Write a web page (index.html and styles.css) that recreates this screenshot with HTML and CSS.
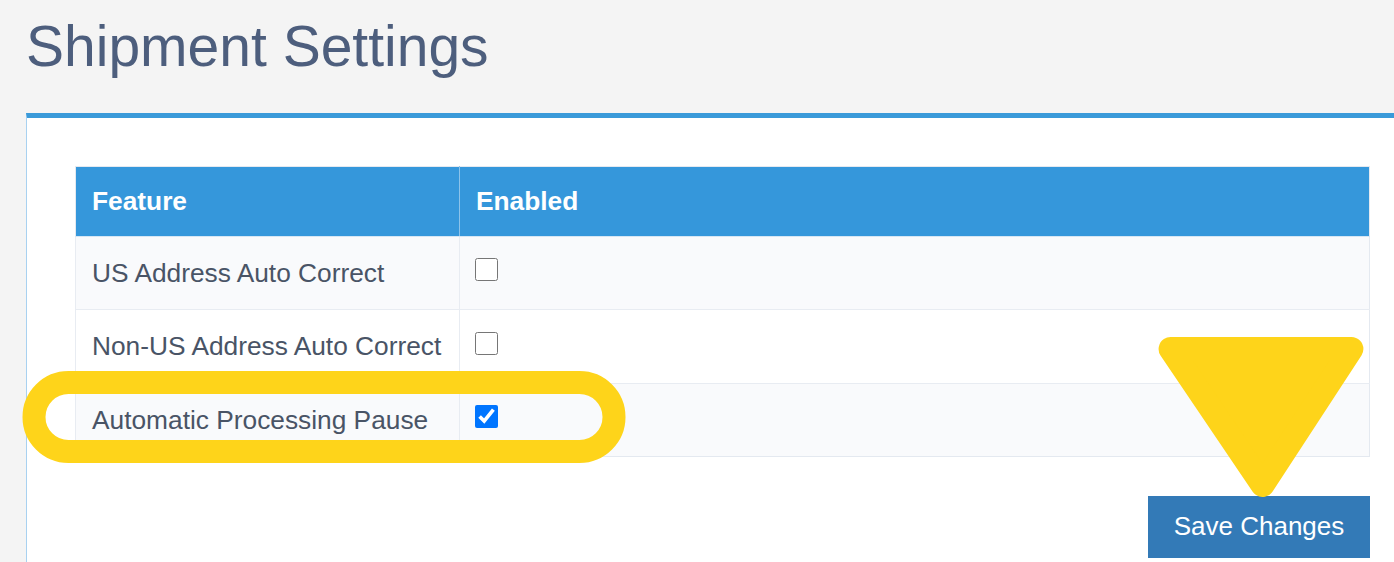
FILE: index.html
```html
<!DOCTYPE html>
<html lang="en">
<head>
  <meta charset="UTF-8">
  <meta name="viewport" content="width=device-width, initial-scale=1.0">
  <link rel="stylesheet" href="styles.css">
</head>
<body>

  <div class="page">
    <h1 class="page-title">Shipment Settings</h1>

    <div class="panel">
      <table class="settings-table">
        <thead>
          <tr>
            <th class="col-feature">Feature</th>
            <th>Enabled</th>
          </tr>
        </thead>
        <tbody>
          <tr>
            <td>US Address Auto Correct</td>
            <td><input type="checkbox" class="toggle"></td>
          </tr>
          <tr>
            <td>Non-US Address Auto Correct</td>
            <td><input type="checkbox" class="toggle"></td>
          </tr>
          <tr>
            <td>Automatic Processing Pause</td>
            <td><input type="checkbox" class="toggle" checked></td>
          </tr>
        </tbody>
      </table>

      <div class="actions">
        <button class="save-button">Save Changes</button>
      </div>
    </div>
  </div>

  <!-- annotation marks drawn over the screenshot -->
  <svg class="annotations" width="1394" height="562" viewBox="0 0 1394 562">
    <rect x="34" y="382.5" width="580" height="69" rx="34.5" ry="34.5" fill="none" stroke="#fed41a" stroke-width="23"/>
    <polygon points="1170.6,349 1351.4,349 1262.6,485" fill="#fed41a" stroke="#fed41a" stroke-width="24" stroke-linejoin="round"/>
  </svg>

</body>
</html>
```

FILE: styles.css
```css
* {
  padding: 0;
  margin: 0;
  box-sizing: border-box;
}

body {
  background-color: #f4f4f4; /* light gray page */
  font-family: "Liberation Sans", Arial, sans-serif;
  color: #495466;
  overflow: hidden;
  position: relative;
  height: 562px;
}

.page {
  padding-left: 26px;
  width: 1418px;
}

.page-title {
  font-size: 57px;
  font-weight: normal;
  line-height: 1.1;
  color: #4d5e7d;
  margin-top: 15px;
  margin-bottom: 35px;
}

.panel {
  width: 1392px;
  background-color: #ffffff;
  border-top: 5px solid #3a9ad9;
  border-left: 1px solid #a8d1f0;
  padding: 48px 48px 0 48px;
  height: 460px;
}

.settings-table {
  width: 100%;
  border-collapse: collapse;
  font-size: 26.3px;
  line-height: 37px;
  border: 1px solid #e4e9f0;
}

.settings-table th {
  background-color: #3597db;
  color: #ffffff;
  font-weight: bold;
  text-align: left;
  padding: 16px 16px;
  border-left: 1px solid #8cc3ea;
  border-bottom: 1px solid #d6e6f4;
}

.settings-table th:first-child {
  border-left: none;
}

.settings-table .col-feature {
  width: 384px;
}

.settings-table td {
  padding: 18px 16px 17.5px 16px;
  border-top: 1px solid #e8ecf2;
  border-left: 1px solid #e8ecf2;
  vertical-align: middle;
}

.settings-table tbody tr:nth-child(odd) {
  background-color: #f9fafc; /* striped rows */
}

.toggle {
  width: 23px;
  height: 23px;
  vertical-align: middle;
  position: relative;
  top: -5px;
  left: -1px;
  margin: 0;
}

.actions {
  display: flex;
  justify-content: flex-end;
  margin-top: 38.5px;
}

.save-button {
  background-color: #337ab7;
  color: #ffffff;
  border: none;
  font-family: "Liberation Sans", Arial, sans-serif;
  font-size: 26px;
  line-height: 37px;
  padding: 12px 25px 13px 25px;
  width: 222px;
}

.annotations {
  position: absolute;
  top: 0;
  left: 0;
  pointer-events: none;
}
```
